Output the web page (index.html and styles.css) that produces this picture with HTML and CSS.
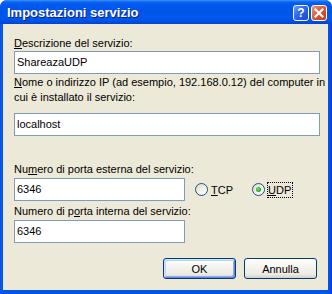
FILE: index.html
```html
<!DOCTYPE html>
<html lang="it">
<head>
    <meta charset="UTF-8">
    <title>Impostazioni servizio</title>
    <link rel="stylesheet" href="styles.css">
</head>
<body>

    <div class="window">
        <div class="titlebar">
            <span class="title">Impostazioni servizio</span>
            <div class="caption-buttons">
                <span class="cap-btn help">?</span>
                <span class="cap-btn close">
                    <svg width="10" height="10" viewBox="0 0 10 10">
                        <path d="M1.5 1.5 L8.5 8.5 M8.5 1.5 L1.5 8.5" stroke="#fff" stroke-width="2.2" stroke-linecap="square"/>
                    </svg>
                </span>
            </div>
        </div>

        <div class="client">
            <div class="label first"><u>D</u>escrizione del servizio:</div>
            <div class="edit">ShareazaUDP</div>

            <div class="label multi"><u>N</u>ome o indirizzo IP (ad esempio, 192.168.0.12) del computer in<br>cui è installato il servizio:</div>
            <div class="edit">localhost</div>

            <div class="label gap-big">Nu<u>m</u>ero di porta esterna del servizio:</div>
            <div class="port-row">
                <div class="edit port">6346</div>
                <div class="radio">
                    <span class="radio-box"></span>
                    <span><u>T</u>CP</span>
                </div>
                <div class="radio checked">
                    <span class="radio-box"></span>
                    <span class="focus"><u>U</u>DP</span>
                </div>
            </div>

            <div class="label gap-small">Numero di p<u>o</u>rta interna del servizio:</div>
            <div class="edit port">6346</div>

            <div class="buttons">
                <button class="btn default">OK</button>
                <button class="btn">Annulla</button>
            </div>
        </div>
    </div>

</body>
</html>
```

FILE: styles.css
```css
body {
    margin: 0;
    padding: 0;
    font-family: "Liberation Sans", Arial, sans-serif;
    font-size: 11px;
    color: #000;
    background: #fff;
}

.window {
    width: 332px;
    height: 294px;
    box-sizing: border-box;
    display: flex;
    flex-direction: column;
    background: linear-gradient(to right, #0831d9 0, #166aee 1px, #0055e5 2px, #0055e5 328px, #0a4ee0 330px, #0831d9 332px);
    border-radius: 7px 7px 0 0;
    overflow: hidden;
}

.titlebar {
    height: 24px;
    flex: none;
    display: flex;
    align-items: center;
    justify-content: space-between;
    padding: 0 5px 0 7px;
    background: linear-gradient(to bottom, #3d95ff 0, #0a63f0 2px, #0058ee 5px, #0055e8 12px, #0058ee 18px, #004ede 22px, #0042d0 24px);
}

.title {
    font-weight: bold;
    font-size: 13px;
    color: #fff;
    text-shadow: 1px 1px 0 #0a1e8c;
    margin-top: 1px;
}

.caption-buttons {
    display: flex;
    gap: 2px;
    margin-top: 1px;
}

.cap-btn {
    width: 16px;
    height: 16px;
    box-sizing: border-box;
    border: 1px solid #fff;
    border-radius: 3px;
    display: flex;
    align-items: center;
    justify-content: center;
    color: #fff;
    font-weight: bold;
    font-size: 12px;
}

.help {
    background: linear-gradient(135deg, #6a9cff 0, #2d66f0 45%, #1848d0 100%);
}

.close {
    background: linear-gradient(135deg, #f0977a 0, #e25a34 45%, #c23a12 100%);
}

.client {
    flex: 1;
    margin: 0 4px 4px 3px;
    background: #ece9d8;
    padding: 13px 8px 0 11px;
}

.label {
    line-height: 13px;
    margin-bottom: 1px;
}

.label.multi {
    line-height: 15px;
    margin-top: 1px;
    margin-bottom: 8px;
    margin-right: -6px;
    white-space: nowrap;
}

.label.gap-big {
    margin-top: 27px;
    margin-bottom: 2px;
}

.label.gap-small {
    margin-top: 4px;
    margin-bottom: 2px;
}

.edit {
    height: 23px;
    box-sizing: border-box;
    border: 1px solid #7f9db9;
    background: #fff;
    padding: 4px 2px;
    line-height: 13px;
}

.edit.port {
    width: 171px;
}

.port-row {
    display: flex;
    align-items: center;
}

.radio {
    display: flex;
    align-items: center;
    gap: 3px;
    margin-left: 10px;
    width: 47px;
}

.radio-box {
    width: 13px;
    height: 13px;
    box-sizing: border-box;
    border: 1px solid #1c5180;
    border-radius: 50%;
    background: linear-gradient(135deg, #dcd9cf 0, #f4f3ee 60%, #ffffff 100%);
    display: flex;
    align-items: center;
    justify-content: center;
}

.radio.checked .radio-box::after {
    content: "";
    width: 5px;
    height: 5px;
    border-radius: 50%;
    background: radial-gradient(circle at 40% 40%, #7fe07c 0, #2fb52c 50%, #1a8f18 100%);
}

.focus {
    outline: 1px dotted #000;
    outline-offset: 0;
    padding: 1px 1px 0 0;
    line-height: 13px;
}

.buttons {
    display: flex;
    justify-content: flex-end;
    gap: 8px;
    margin-top: 15px;
    padding-right: 3px;
}

.btn {
    width: 73px;
    height: 21px;
    box-sizing: border-box;
    border: 1px solid #003c74;
    border-radius: 3px;
    background: linear-gradient(to bottom, #ffffff 0, #f5f4ef 40%, #ecebe5 80%, #d6d0c5 100%);
    font-family: "Liberation Sans", Arial, sans-serif;
    font-size: 11px;
    color: #000;
    padding: 0;
}

.btn.default {
    box-shadow: inset 1px 1px 0 #cee7ff, inset -1px -1px 0 #6982ee, inset 2px 2px 0 #bcd4f6, inset -2px -2px 0 #89ade4;
}
```
